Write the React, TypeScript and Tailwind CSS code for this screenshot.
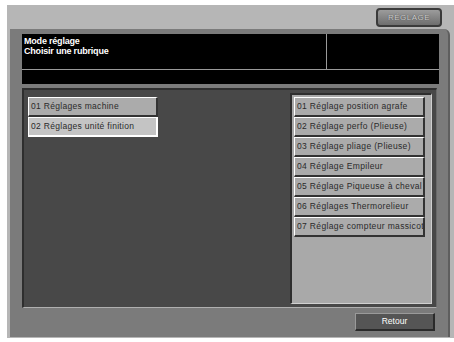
import React from "react";

const leftItems = ["01 Réglages machine", "02 Réglages unité finition"];
const rightItems = [
  "01 Réglage position agrafe",
  "02 Réglage perfo (Plieuse)",
  "03 Réglage pliage (Plieuse)",
  "04 Réglage Empileur",
  "05 Réglage Piqueuse à cheval",
  "06 Réglages Thermorelieur",
  "07 Réglage compteur massicot",
];

const font = { fontFamily: "'Liberation Sans', Arial, sans-serif" };

const App = () => {
  return (
    <div className="w-[454px] h-[342px] bg-white pl-[7px] pt-[5px]" style={font}>
      <div className="w-[447px] h-[333px] bg-[#b6b6b6] flex flex-col">
        {/* top strip with mode button */}
        <div className="h-[24px] flex justify-end pr-[12px] pt-[3px]">
          <div className="w-[66px] h-[19px] rounded-[4px] border-2 border-[#3a3a3a] bg-gradient-to-b from-[#9c9c9c] to-[#6e6e6e] flex items-center justify-center">
            <span className="text-[8px] tracking-[0.5px] text-[#d0d0d0] [text-shadow:0_0_1px_#333]">RÉGLAGE</span>
          </div>
        </div>

        {/* main frame */}
        <div className="ml-[3px] w-[440px] h-[308px] bg-[#7b7b7b] rounded-tr-[6px] border-r-2 border-[#5e5e5e] pt-[5px] pl-[12px] flex flex-col">
          {/* header */}
          <div className="w-[417px] h-[50px] bg-black flex flex-col">
            <div className="h-[36px] flex border-b border-[#9a9a9a]">
              <div className="w-[305px] border-r border-[#9a9a9a] pl-[2px] pt-[2px] text-white font-bold text-[9px] leading-[10px] tracking-[-0.2px]">
                <div>Mode réglage</div>
                <div>Choisir une rubrique</div>
              </div>
              <div className="flex-1" />
            </div>
            <div className="flex-1" />
          </div>

          {/* content panel */}
          <div className="mt-[4px] w-[415px] h-[220px] bg-[#484848] border-t-2 border-l-2 border-[#2e2e2e] border-b border-r border-b-[#b0b0b0] border-r-[#6a6a6a] flex">
            <div className="flex-1 pl-[4px] pt-[7px] flex flex-col">
              {leftItems.map((t, i) => (
                <div
                  key={t}
                  className={`w-[130px] h-[20px] flex items-center pl-[2px] text-[8.5px] text-[#2a2a2a] tracking-[0.3px] border-t border-l border-white border-b-2 border-r-2 border-b-[#333] border-r-[#333] ${
                    i === 1 ? "bg-[#c4c4c4] border-b-white border-r-white border-b border-r" : "bg-[#ababab]"
                  }`}
                >
                  {t}
                </div>
              ))}
            </div>
            <div className="w-[142px] my-[3px] mr-[4px] bg-[#a9a9a9] border-t-2 border-l-2 border-[#2e2e2e] border-b border-r border-b-[#d0d0d0] border-r-[#d0d0d0] pl-[2px] pt-[2px] flex flex-col">
              {rightItems.map((t) => (
                <div
                  key={t}
                  className="w-[131px] h-[20px] flex items-center pl-[2px] text-[8.5px] text-[#2a2a2a] tracking-[0.35px] whitespace-nowrap overflow-hidden bg-[#ababab] border-t border-l border-white border-b-2 border-r-2 border-b-[#333] border-r-[#333]"
                >
                  {t}
                </div>
              ))}
            </div>
          </div>

          {/* footer */}
          <div className="flex justify-end pr-[13px] pt-[5px]">
            <div className="w-[80px] h-[18px] bg-[#555555] border-t border-l border-[#9a9a9a] border-b-2 border-r-2 border-b-[#2a2a2a] border-r-[#2a2a2a] flex items-center justify-center text-white text-[8.5px]">
              Retour
            </div>
          </div>
        </div>
      </div>
    </div>
  );
};

export default App;
